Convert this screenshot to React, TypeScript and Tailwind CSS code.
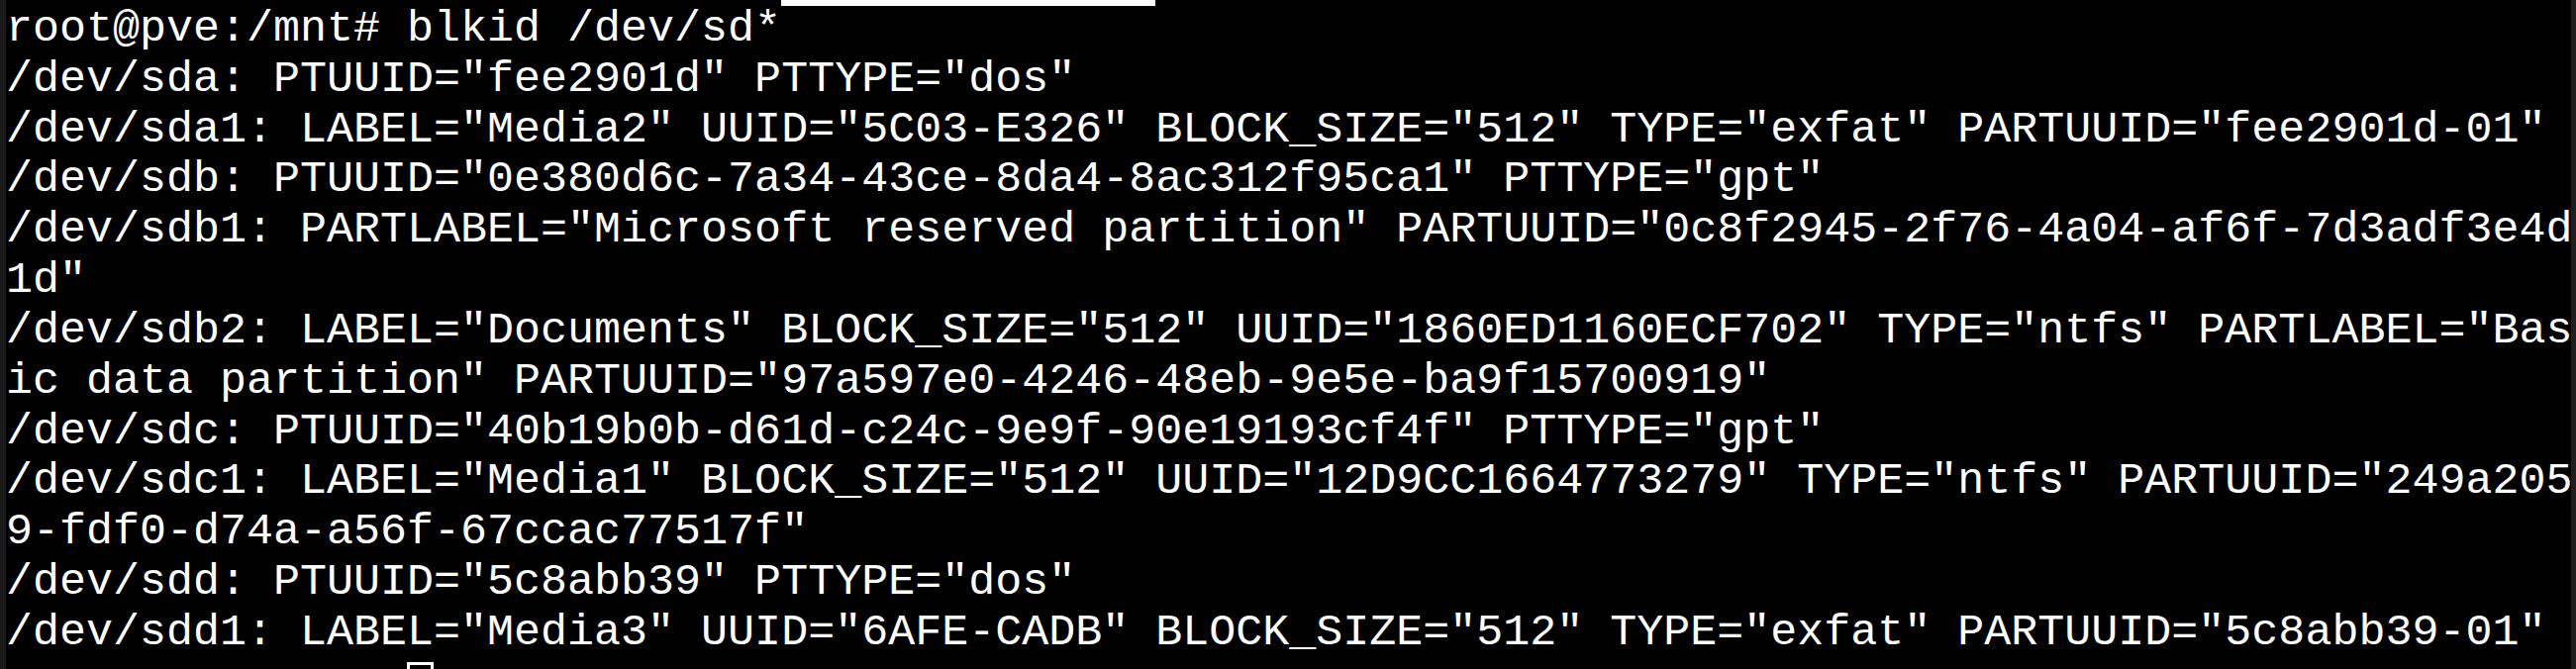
const lines = [
  "root@pve:/mnt# blkid /dev/sd*",
  '/dev/sda: PTUUID="fee2901d" PTTYPE="dos"',
  '/dev/sda1: LABEL="Media2" UUID="5C03-E326" BLOCK_SIZE="512" TYPE="exfat" PARTUUID="fee2901d-01"',
  '/dev/sdb: PTUUID="0e380d6c-7a34-43ce-8da4-8ac312f95ca1" PTTYPE="gpt"',
  '/dev/sdb1: PARTLABEL="Microsoft reserved partition" PARTUUID="0c8f2945-2f76-4a04-af6f-7d3adf3e4d',
  '1d"',
  '/dev/sdb2: LABEL="Documents" BLOCK_SIZE="512" UUID="1860ED1160ECF702" TYPE="ntfs" PARTLABEL="Bas',
  'ic data partition" PARTUUID="97a597e0-4246-48eb-9e5e-ba9f15700919"',
  '/dev/sdc: PTUUID="40b19b0b-d61d-c24c-9e9f-90e19193cf4f" PTTYPE="gpt"',
  '/dev/sdc1: LABEL="Media1" BLOCK_SIZE="512" UUID="12D9CC1664773279" TYPE="ntfs" PARTUUID="249a205',
  '9-fdf0-d74a-a56f-67ccac77517f"',
  '/dev/sdd: PTUUID="5c8abb39" PTTYPE="dos"',
  '/dev/sdd1: LABEL="Media3" UUID="6AFE-CADB" BLOCK_SIZE="512" TYPE="exfat" PARTUUID="5c8abb39-01"',
];

const App = () => {
  return (
    <div className="relative flex h-[676px] w-[2602px] overflow-hidden bg-black">
      <div className="w-[6px] shrink-0 bg-[#1a1a1a]" />

      <div
        className="flex-1 overflow-hidden pt-[5px] text-[45px] leading-[50.83px] text-white whitespace-pre"
        style={{ fontFamily: '"Liberation Mono", "Courier New", monospace' }}
      >
        {lines.map((line, i) => (
          <div key={i} className="h-[50.83px]">
            {line}
          </div>
        ))}
        {/* next prompt row: only the cursor shows above the bottom edge */}
        <div className="flex h-[50.83px] items-start pl-[405px]">
          <span className="mt-[3px] h-[46px] w-[27px] border-[3px] border-white" />
        </div>
      </div>

      <div className="w-[5px] shrink-0 bg-[#1e1e1e]" />

      {/* white strip from the window above */}
      <div className="absolute left-[789px] top-0 h-[6px] w-[378px] bg-white" />
    </div>
  );
};

export default App;
